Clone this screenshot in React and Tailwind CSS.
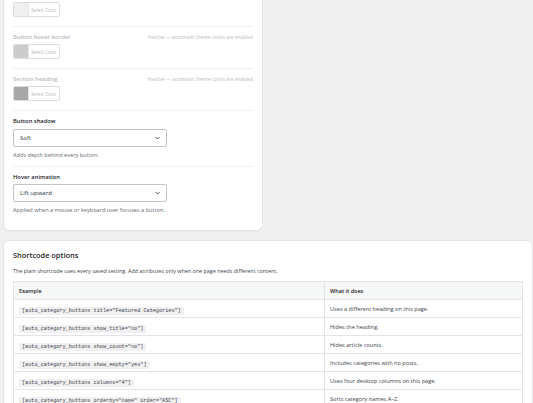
const colorRows = [
    { label: "Button hover border", swatch: "bg-[#cccccc]" },
    { label: "Section heading", swatch: "bg-[#a7a7a7]" },
];

const shortcodes = [
    ['[auto_category_buttons title="Featured Categories"]', "Uses a different heading on this page."],
    ['[auto_category_buttons show_title="no"]', "Hides the heading."],
    ['[auto_category_buttons show_count="no"]', "Hides article counts."],
    ['[auto_category_buttons show_empty="yes"]', "Includes categories with no posts."],
    ['[auto_category_buttons columns="4"]', "Uses four desktop columns on this page."],
    ['[auto_category_buttons orderby="name" order="ASC"]', "Sorts category names A\u2013Z."],
];

const ColorButton = ({ swatch }) => (
    <div className="flex h-[15px] w-[47px] overflow-hidden rounded-[2px] border border-[#dcdcde] bg-white">
        <span className={`w-[14px] ${swatch}`} />
        <span className="flex flex-1 items-center justify-center border-l border-[#e5e5e5] text-[4.6px] text-[#b4b6b8]">Select Color</span>
    </div>
);

const Chevron = () => (
    <svg width="5" height="4" viewBox="0 0 10 7" fill="none">
        <path d="M1 1.5l4 4 4-4" stroke="#3c434a" strokeWidth="1.8" />
    </svg>
);

const SelectField = ({ value }) => (
    <div className="flex h-[18px] w-[154px] items-center justify-between rounded-[2px] border border-[#c3c4c7] bg-white pl-[6px] pr-[6px] text-[6px] text-[#2c3338]">
        <span>{value}</span>
        <Chevron />
    </div>
);

const App = () => {
    return (
        <div className="h-[403px] w-[533px] overflow-hidden bg-[#f0f0f1] pl-[3px] font-['Open_Sans',sans-serif] leading-[8px]">
            {/* appearance card, top is scrolled away */}
            <div className="w-[260px] rounded-b-[6px] border border-t-0 border-[#e2e4e7] bg-white px-[9px] shadow-[0_1px_1px_rgba(0,0,0,0.03)]">
                <div className="border-b border-[#f0f0f1] pb-[9px] pt-[2px]">
                    <ColorButton swatch="bg-[#f0f0f1]" />
                </div>

                {colorRows.map((row) => (
                    <div key={row.label} className="border-b border-[#f0f0f1] pb-[9px] pt-[6px]">
                        <div className="flex h-[8px] items-center justify-between">
                            <span className="text-[5.8px] font-semibold text-[#b7b9bc]">{row.label}</span>
                            <span className="text-[4.8px] text-[#b7b9bc]">Inactive — automatic theme colors are enabled</span>
                        </div>
                        <div className="mt-[3px]">
                            <ColorButton swatch={row.swatch} />
                        </div>
                    </div>
                ))}

                <div className="border-b border-[#f0f0f1] pb-[7px] pt-[6px]">
                    <div className="h-[8px] text-[5.8px] font-semibold text-[#1d2327]">Button shadow</div>
                    <div className="mt-[4px]">
                        <SelectField value="Soft" />
                    </div>
                    <p className="mt-[4px] h-[8px] text-[5.6px] text-[#646970]">Adds depth behind every button.</p>
                </div>

                <div className="pb-[16px] pt-[6px]">
                    <div className="h-[8px] text-[5.8px] font-semibold text-[#1d2327]">Hover animation</div>
                    <div className="mt-[3px]">
                        <SelectField value="Lift upward" />
                    </div>
                    <p className="mt-[4px] h-[8px] text-[5.6px] text-[#646970]">Applied when a mouse or keyboard user focuses a button.</p>
                </div>
            </div>

            {/* shortcode card */}
            <div className="mt-[9px] w-[530px] rounded-[6px] border border-[#e2e4e7] bg-white px-[9px] pb-[20px] pt-[9px] shadow-[0_1px_1px_rgba(0,0,0,0.03)]">
                <h2 className="h-[11px] text-[7.4px] font-semibold leading-[11px] text-[#1d2327]">Shortcode options</h2>
                <p className="mt-[6px] h-[8px] text-[5.4px] text-[#3c434a]">The plain shortcode uses every saved setting. Add attributes only when one page needs different content.</p>

                <table className="mt-[6px] w-[510px] border-collapse border border-[#e2e4e7] text-left">
                    <thead>
                        <tr className="h-[18px] bg-[#f6f7f7]">
                            <th className="w-[311px] border border-[#e2e4e7] px-[5px] text-[5.5px] font-semibold text-[#1d2327]">Example</th>
                            <th className="border border-[#e2e4e7] px-[5px] text-[5.5px] font-semibold text-[#1d2327]">What it does</th>
                        </tr>
                    </thead>
                    <tbody>
                        {shortcodes.map(([code, desc]) => (
                            <tr key={code} className="h-[18px]">
                                <td className="border border-[#e2e4e7] px-[5px]">
                                    <code className="bg-[#f0f0f1] px-[3px] py-[1px] font-['Liberation_Mono',monospace] text-[5.2px] text-[#3c434a]">{code}</code>
                                </td>
                                <td className="border border-[#e2e4e7] px-[5px] text-[5.6px] text-[#3c434a]">{desc}</td>
                            </tr>
                        ))}
                    </tbody>
                </table>
            </div>
        </div>
    );
};

export default App;
